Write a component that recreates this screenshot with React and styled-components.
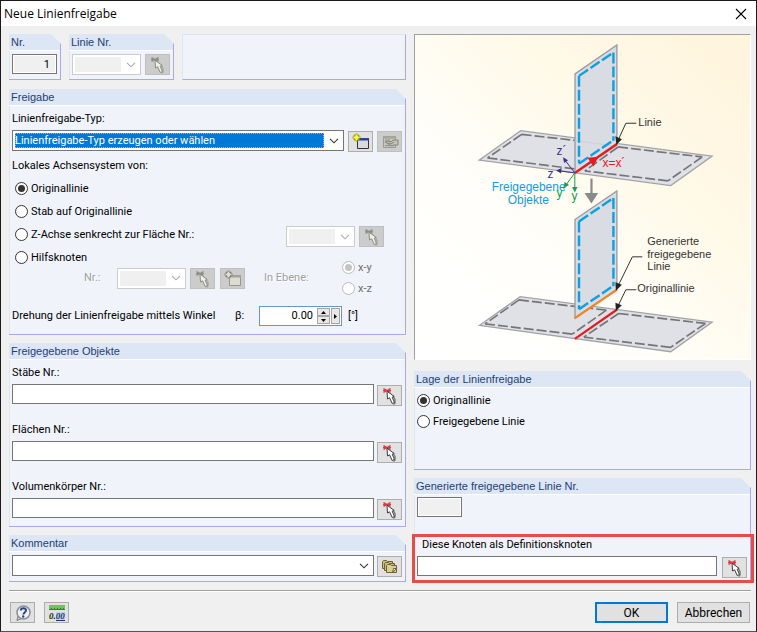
import React, { useState } from "react";
import styled, { createGlobalStyle } from "styled-components";

const GlobalStyle = createGlobalStyle`
  * {
    box-sizing: border-box;
  }
  body {
    margin: 0;
    background: #f0f0f0;
    color: #000;
    font-family: Roboto, "Liberation Sans", sans-serif;
    font-size: 11px;
    line-height: 16px;
  }
  button, input, select {
    margin: 0;
    font: inherit;
    color: inherit;
  }
`;

const Dialog = styled.div`
  min-height: 100vh;
  border: 1px solid #1a1a1e;
  border-bottom-color: #555;
  background: #f0f0f0;
`;

const TitleBar = styled.header`
  display: flex;
  align-items: center;
  justify-content: space-between;
  height: 25px;
  padding: 0 9px 0 3px;
  background: #fff;
`;

const Title = styled.h1`
  margin: 0;
  font-family: "Open Sans", sans-serif;
  font-size: 12px;
  font-weight: 400;
`;

const CloseButton = styled.button`
  display: flex;
  padding: 0;
  border: 0;
  background: none;
`;

const Columns = styled.main`
  display: grid;
  grid-template-columns: minmax(0, 397fr) minmax(0, 337fr);
  gap: 8px;
  padding: 8px 5px 8px 8px;
`;

const Column = styled.div`
  display: flex;
  flex-direction: column;
  gap: 8px;
`;

const TopRow = styled.div`
  display: flex;
  gap: 8px;
  height: 47px;
  padding-bottom: 1px;
`;

const GroupBox = styled.section`
  flex: none;
  border: 1px solid #a8a8ee;
  border-width: 0 1px 1px 0;
  background: #f0f4fa;
  clip-path: polygon(0 0, calc(100% - 10px) 0, 100% 10px, 100% 100%, 0 100%);
`;

const EmptyBox = styled.div`
  flex: 1;
  border: 1px solid #a8a8ee;
  border-top-color: #dce6f5;
  border-left-color: #dce6f5;
  background: #f0f4fa;
`;

const GroupTitle = styled.h2`
  height: 17px;
  margin: 0;
  padding-left: 2px;
  border-bottom: 1px solid #fff;
  background: #dce6f5;
  color: #1e4073;
  font-family: "Liberation Sans", Arial, sans-serif;
  font-size: 11px;
  font-weight: 400;
  line-height: 17px;
`;

const GroupBody = styled.div`
  padding: ${(p) => p.$pad || "4px 3px 4px 2px"};
  border-left: 1px solid #dce6f5;
`;

const Row = styled.div`
  display: flex;
  align-items: flex-start;
  gap: ${(p) => p.$gap || 4}px;

  & > button {
    margin-top: ${(p) => (p.$flush ? 0 : 1)}px;
  }
`;

const Label = styled.label`
  display: block;
  margin-bottom: 3px;
  padding-left: ${(p) => p.$indent || 0}px;
`;

const TextInput = styled.input`
  flex: ${(p) => (p.$width ? "none" : 1)};
  width: ${(p) => (p.$width ? `${p.$width}px` : "auto")};
  min-width: 0;
  height: 20px;
  padding: 0 6px 0 3px;
  border: 1px solid #767676;
  border-radius: 0;
  background: #fff;
  box-shadow: inset 0 0 0 1px #fff;

  &:read-only {
    background: #f0f0f0;
    text-align: right;
  }
`;

const ComboFrame = styled.div`
  display: flex;
  align-items: center;
  flex: ${(p) => (p.$small ? "none" : 1)};
  width: ${(p) => (p.$small ? "69px" : "auto")};
  min-width: 0;
  height: 21px;
  padding: 2px;
  border: 1px solid ${(p) => (p.$disabled ? "#ccc" : "#767676")};
  background: #fff;
  color: ${(p) => (p.$disabled ? "#aaa" : "#333")};

  svg {
    flex: none;
    margin: 0 2px 0 5px;
  }
`;

const ComboSelect = styled.select`
  flex: 1;
  min-width: 0;
  height: 15px;
  padding: 0;
  border: 0;
  border-radius: 0;
  appearance: none;
  background: ${(p) => (p.$active ? "#0078d7" : "#fff")};
  color: ${(p) => (p.$active ? "#fff" : "#000")};
  line-height: 15px;
  outline: ${(p) => (p.$active ? "1px dotted #ffa040" : "0")};
  outline-offset: -1px;

  &:disabled {
    background: #f0f0f0;
    opacity: 1;
  }
`;

const ToolButton = styled.button`
  display: flex;
  flex: none;
  align-items: center;
  justify-content: center;
  width: 25px;
  height: 21px;
  padding: 0;
  border: 1px solid #adadad;
  background: #e1e1e1;

  &:disabled {
    border-color: #bfbfbf;
    background: #ccc;
  }
`;

const AxesTitle = styled.div`
  margin: 6px 0 3px;
`;

const RadioLabel = styled.label`
  display: flex;
  align-items: center;
  gap: 3px;
  height: ${(p) => p.$height || 23}px;
  padding-left: ${(p) => (p.$indent ? 3 : 0)}px;
  color: ${(p) => (p.$disabled ? "#6d6d6d" : "#000")};
`;

const Radio = styled.input.attrs({ type: "radio" })`
  display: grid;
  place-items: center;
  flex: none;
  width: 13px;
  height: 13px;
  appearance: none;
  border: 1px solid #333;
  border-radius: 50%;
  background: #fff;

  &:checked::before {
    content: "";
    width: 7px;
    height: 7px;
    border-radius: 50%;
    background: #333;
  }
  &:disabled {
    border-color: #bbb;
  }
  &:disabled::before {
    background: #c4c4c4;
  }
`;

const RadioRow = styled.div`
  display: flex;
  align-items: center;
  justify-content: space-between;
  height: 23px;
  padding-right: 18px;
`;

const RadioTools = styled.div`
  display: flex;
  gap: 4px;
  padding-top: 4px;
`;

const HelperRow = styled.div`
  display: flex;
  align-items: center;
  height: 42px;
  margin-top: -12px;
  padding-left: 72px;
`;

const Dimmed = styled.label`
  flex: none;
  width: ${(p) => p.$width}px;
  color: #a0a0a0;
  text-shadow: 1px 1px 0 #fff;
`;

const HelperTools = styled.div`
  display: flex;
  gap: 5px;
  padding: 1px 19px 0 4px;
`;

const AngleRow = styled.div`
  display: grid;
  grid-template-columns: 223px 24px 83px auto;
  align-items: center;
  margin-top: 7px;
`;

const Unit = styled.span`
  padding-left: 6px;
`;

const Spinner = styled.div`
  display: flex;
  height: 20px;
  padding: 1px;
  border: 1px solid #6d95bf;
  background: #fff;
`;

const SpinnerInput = styled.input`
  flex: 1;
  min-width: 0;
  padding: 0 4px 0 0;
  border: 0;
  background: none;
  text-align: right;
`;

const SpinnerButtons = styled.div`
  display: grid;
  grid-template-rows: 1fr 1fr;
  width: 13px;
  margin-right: 1px;
`;

const SpinButton = styled.button`
  display: flex;
  align-items: center;
  justify-content: center;
  min-width: 9px;
  min-height: 0;
  padding: 0;
  border: 1px solid #a6a6a6;
  background: #e8e8e8;
`;

const FieldList = styled.div`
  display: flex;
  flex-direction: column;
  gap: 16px;
`;

const NodeField = styled.div`
  padding-top: 4px;
`;

const Picture = styled.figure`
  margin: 0 0 3px;
  border: 1px solid #fff;
  border-top-color: #a0a0a0;
  border-left-color: #a0a0a0;
  background: linear-gradient(to top right, #fff 0%, #fffefa 35%, #fff9e8 65%, #fff4dc 100%);

  svg {
    display: block;
    width: 100%;
  }
`;

const Diagram = styled.svg`
  font-family: "Liberation Sans", Arial, sans-serif;
  font-size: 11px;
  fill: #333;
`;

const HighlightArea = styled.div`
  position: relative;
`;

const Highlight = styled.div`
  position: absolute;
  right: -3px;
  bottom: -1px;
  left: -2px;
  height: 49px;
  border: 3px solid #e84c46;
  pointer-events: none;
`;

const LocationBody = styled.div`
  min-height: 81px;
  padding: 2px;
  border-left: 1px solid #dce6f5;
`;

const Footer = styled.footer`
  display: flex;
  align-items: center;
  gap: 9px;
  margin: 0 5px 0 8px;
  padding: 11px 1px 7px;
  border-top: 1px solid #a0a0a0;
  box-shadow: inset 0 1px 0 #fff;
`;

const FooterButton = styled.button`
  width: 73px;
  height: 21px;
  padding: 0;
  border: ${(p) => (p.$primary ? "2px solid #0078d7" : "1px solid #adadad")};
  background: #e1e1e1;
  font-size: 12px;
  line-height: 16px;
`;

const Spacer = styled.div`
  flex: 1;
`;

const Chevron = () => (
  <svg width="10" height="6" viewBox="0 0 10 6" fill="none" stroke="currentColor">
    <path d="M1 .8 5 4.8 9 .8" strokeWidth="1.1" />
  </svg>
);

const PickIcon = ({ disabled }) => (
  <svg width="18" height="18" viewBox="0 0 18 18">
    <path
      d="M2.5 1.500 9.500 5.500M9.500 1.500 2.500 5.500M2 3.500h8"
      stroke={disabled ? "#8f8f8a" : "#e0383c"}
      strokeWidth="1.4"
      fill="none"
    />
    <path d="M11.500 8.500 14 12.500v3.500l-1.500 1.500" stroke={disabled ? "#a5a5a0" : "#777"} strokeWidth="1.400" fill="none" />
    <path
      d="M6 4.200 6.500 12l2.100-1.200 2.600 5.700 2.300-1-2.300-5.300 2-.8z"
      fill={disabled ? "#efefe4" : "#fff"}
      stroke={disabled ? "#8c8c84" : "#3c3c3c"}
      strokeWidth="1"
    />
  </svg>
);

const NewIcon = ({ disabled }) => (
  <svg width="18" height="18" viewBox="0 0 18 18">
    <path d="M5.500 6.500h11v9h-11z" fill={disabled ? "#dddcd0" : "#d8dade"} stroke={disabled ? "#96968e" : "#333"} />
    <path d="M5 5h12v2.500H5z" fill={disabled ? "#a3a39b" : "#2e4585"} />
    <path
      d="M4.500 .5v8M.5 4.500h8M2 2l5 5M7 2 2 7"
      stroke={disabled ? "#85857c" : "#a3a31a"}
      strokeWidth="2"
    />
    <path
      d="M4.500 1.500v6M1.500 4.500h6M3 3l3 3M6 3 3 6"
      stroke={disabled ? "#deded4" : "#ffff29"}
      strokeWidth="1.200"
    />
  </svg>
);

const EditIcon = () => (
  <svg width="18" height="18" viewBox="0 0 18 18">
    <path d="M2.500 3.500h12v11h-12z" fill="#c6c6bd" stroke="#999990" />
    <path d="M2 3h13v2.500H2z" fill="#a4a49b" />
    <path d="M4 7h5M4 12.500h9" stroke="#92928a" />
    <path d="m4 9 3-1 3 1 2-2h5v5h-4l-3 1-4-3z" fill="#c2c2b8" stroke="#85857c" />
    <path d="m7 10 3 1 3-2" fill="none" stroke="#85857c" />
  </svg>
);

const CommentIcon = () => (
  <svg width="18" height="18" viewBox="0 0 18 18" stroke="#6b6234" fill="#c9bf84">
    <path d="M1.500 3.500 2.500 2.500h3l1 1h5v7h-10z" />
    <path d="M3.500 5.500 4.500 4.500h3l1 1h5v7h-10z" />
    <path d="M5.500 7.500 6.500 6.500h3l1 1h5v7h-10z" fill="#d9cf94" />
    <path d="M11.500 14.500 12.500 10.500h3z" fill="#fff8cf" />
  </svg>
);

const HelpIcon = () => (
  <svg width="18" height="18" viewBox="0 0 18 18">
    <path d="M4 12 3 16.500l4.500-2z" fill="#dfe1e6" stroke="#777" />
    <circle cx="9.500" cy="8.500" r="6.500" fill="#f1f2f5" stroke="#8c8f96" strokeWidth="1.500" />
    <path d="M6.800 6.500C7 3.700 12.200 3.500 12 6.500c-.1 1.900-2.600 2-2.600 4" fill="none" stroke="#2a4485" strokeWidth="2" />
    <circle cx="9.200" cy="12.500" r="1.200" fill="#2a4485" />
  </svg>
);

const UnitsIcon = () => (
  <svg width="18" height="18" viewBox="0 0 18 18">
    <path d="M1 1h16v5H1z" fill="#70c267" />
    <path d="M1 5.500h16M3.500 4v2M6.500 4v2M9.500 4v2M12.500 4v2M15.500 4v2" stroke="#348136" />
    <path d="M8 8h9v8H8z" fill="#c5d0e6" />
    <text x="1" y="15" fontFamily="Liberation Serif, serif" fontSize="9" fontStyle="italic" fontWeight="700" fill="#222">
      0.<tspan fill="#22396f">00</tspan>
    </text>
    <path d="M8 16.500h9" stroke="#22396f" />
  </svg>
);

const ReleaseDiagram = () => (
  <Diagram viewBox="0 0 336 325" role="img" aria-label="Linienfreigabe">
    <g fill="#dfe1e7" stroke="#a3a3a6" strokeWidth="1.300">
      <path d="M64.500 125.500 106 96l192 25.500-41.500 29.500z" />
      <path d="M64.500 291.300 105.500 262.500 298 288l-41.500 29.700z" />
    </g>
    <g fill="none" stroke="#757575" strokeWidth="1.700" strokeDasharray="10 3">
      <path d="M107 99.700 160.300 105.700M107 99.700 72.700 123.300M72.700 123.300 160.300 134.300" />
      <path d="M203.700 112.300 288 122.300M288 122.300 253.700 146.300M253.700 146.300 170.300 136.300M203.700 112.300 170.300 136.300" />
      <path d="M104.300 265.700 192 276M192 276 157.700 300M157.700 300 70.300 289.700M104.300 265.700 70.300 289.700" />
      <path d="M204.300 279.300 291.300 289.300M291.300 289.300 256.300 313.300M256.300 313.300 169.300 303M204.300 279.300 169.300 303" />
    </g>
    <path d="M160.300 304.700 202.700 275.300" stroke="#e31b23" strokeWidth="2.200" />
    <g fill="#d9dce2" stroke="#99999c" strokeWidth="1.300">
      <path d="M160.500 39 202.500 10v98.500L160.500 138z" />
      <path d="M160.500 185 202.500 156.500V255L160.500 284z" />
    </g>
    <path d="M160.500 106 202.500 111.500" stroke="#cdcfd4" />
    <g fill="none" stroke="#0c9fe2" strokeWidth="2.400" strokeDasharray="11 3">
      <path d="M164.500 41 199 17.500M199 17.500V106M164.500 129 199 105.500M164.500 41V129" />
      <path d="M164.500 187 199 163.500M199 163.500V252M164.500 275 199 251.500M164.500 187V275" />
    </g>
    <path d="M160.300 284 202.700 255.300" stroke="#f5821f" strokeWidth="2.200" />
    <path d="M160.300 138.300 202.700 109.300" stroke="#e31b23" strokeWidth="2.400" />
    <path d="M184 122 173 123 179 132z" fill="#e31b23" />

    <g stroke="#3b3187" fill="#3b3187">
      <path d="M160.300 138.300 150 125M160.300 138.300 145 136.300" />
      <path d="M148.500 122.500 149.500 128.500 153.500 125.500zM141.500 136 147 133.500 146.500 139z" stroke="none" />
    </g>
    <g stroke="#1a9c4b" fill="#1a9c4b">
      <path d="M160.300 138.300V154M160.300 138.300 151 151" />
      <path d="M160.300 158 157.500 152.500h5.500zM149 153.500 150 147.500 154.500 150.500z" stroke="none" />
    </g>
    <path d="M177 144v16" stroke="#8a8a8a" strokeWidth="2.200" />
    <path d="M170 158.500h13.700L177 169z" fill="#8a8a8a" />

    <g fill="none" stroke="#333">
      <path d="M222 88.500H211.500L203.500 106" />
      <path d="M228 222.500H218L203.500 252" />
      <path d="M222 255.500H211.500L203.500 272" />
    </g>
    <path d="M202 110 201 101.500 207.500 104.500zM201.500 256.500 201 248 207.500 250.500zM201.500 276.500 201 268.500 207.500 271z" fill="#222" />

    <text x="224" y="91">Linie</text>
    <text x="233" y="211">Generierte</text>
    <text x="233" y="224">freigegebene</text>
    <text x="233" y="236">Linie</text>
    <text x="223" y="258">Originallinie</text>
    <g fontSize="12">
      <g fill="#0c9fe2">
        <text x="77" y="156">Freigegebene</text>
        <text x="93" y="170">Objekte</text>
      </g>
      <g fill="#3b3187">
        <text x="142" y="120">z´</text>
        <text x="133" y="143">z</text>
      </g>
      <g fill="#1a9c4b">
        <text x="142" y="162">y´</text>
        <text x="157" y="166">y</text>
      </g>
      <text x="188" y="132" fill="#e31b23">x=x´</text>
    </g>
  </Diagram>
);

const Group = ({ title, pad, children }) => (
  <GroupBox>
    <GroupTitle>{title}</GroupTitle>
    <GroupBody $pad={pad}>{children}</GroupBody>
  </GroupBox>
);

const Combo = ({ small, disabled, active, options = [""], ...rest }) => (
  <ComboFrame $small={small} $disabled={disabled}>
    <ComboSelect disabled={disabled} $active={active} {...rest}>
      {options.map((option) => (
        <option key={option}>{option}</option>
      ))}
    </ComboSelect>
    <Chevron />
  </ComboFrame>
);

const PickButton = ({ disabled }) => (
  <ToolButton type="button" disabled={disabled} aria-label="Auswählen">
    <PickIcon disabled={disabled} />
  </ToolButton>
);

const RadioOption = ({ label, value, group, selected, onSelect, height, indent, disabled }) => (
  <RadioLabel $height={height} $indent={indent} $disabled={disabled}>
    <Radio
      name={group}
      value={value}
      checked={selected === value}
      disabled={disabled}
      onChange={() => onSelect(value)}
    />
    {label}
  </RadioLabel>
);

const objectFields = [
  { id: "members", label: "Stäbe Nr.:" },
  { id: "surfaces", label: "Flächen Nr.:" },
  { id: "solids", label: "Volumenkörper Nr.:" },
];

const App = () => {
  const [axes, setAxes] = useState("line");
  const [plane, setPlane] = useState("xy");
  const [location, setLocation] = useState("original");
  const [angle, setAngle] = useState("0.00");

  const turn = (step) => setAngle((Number(angle) + step).toFixed(2));
  const axesProps = { group: "axes", selected: axes, onSelect: setAxes, indent: true };
  const planeProps = { group: "plane", selected: plane, onSelect: setPlane, height: 21, disabled: true };
  const locationProps = { group: "location", selected: location, onSelect: setLocation, height: 21 };

  return (
    <>
      <GlobalStyle />
      <Dialog>
        <TitleBar>
          <Title>Neue Linienfreigabe</Title>
          <CloseButton type="button" aria-label="Schließen">
            <svg width="12" height="12" viewBox="0 0 12 12" stroke="#000">
              <path d="m1 1 10 10M11 1 1 11" strokeWidth="1.100" />
            </svg>
          </CloseButton>
        </TitleBar>

        <Columns>
          <Column>
            <TopRow>
              <Group title="Nr." pad="3px 3px 5px 2px">
                <Row>
                  <TextInput $width={45} defaultValue="1" readOnly aria-label="Nr." />
                </Row>
              </Group>
              <Group title="Linie Nr." pad="3px 3px 4px 2px">
                <Row $flush>
                  <Combo small disabled aria-label="Linie Nr." />
                  <PickButton disabled />
                </Row>
              </Group>
              <EmptyBox />
            </TopRow>

            <Group title="Freigabe" pad="5px 3px 8px 2px">
              <Label htmlFor="type">Linienfreigabe-Typ:</Label>
              <Row>
                <Combo id="type" active options={["Linienfreigabe-Typ erzeugen oder wählen"]} />
                <ToolButton type="button" aria-label="Neu">
                  <NewIcon />
                </ToolButton>
                <ToolButton type="button" disabled aria-label="Bearbeiten">
                  <EditIcon />
                </ToolButton>
              </Row>
              <AxesTitle>Lokales Achsensystem von:</AxesTitle>
              <RadioOption label="Originallinie" value="line" {...axesProps} />
              <RadioOption label="Stab auf Originallinie" value="member" {...axesProps} />
              <RadioRow>
                <RadioOption label="Z-Achse senkrecht zur Fläche Nr.:" value="surface" {...axesProps} />
                <RadioTools>
                  <Combo small disabled aria-label="Fläche Nr." />
                  <PickButton disabled />
                </RadioTools>
              </RadioRow>
              <RadioOption label="Hilfsknoten" value="nodes" {...axesProps} />
              <HelperRow>
                <Dimmed $width={33} htmlFor="node">Nr.:</Dimmed>
                <Combo small disabled id="node" />
                <HelperTools>
                  <PickButton disabled />
                  <ToolButton type="button" disabled aria-label="Neuer Knoten">
                    <NewIcon disabled />
                  </ToolButton>
                </HelperTools>
                <Dimmed as="span" $width={78}>In Ebene:</Dimmed>
                <div>
                  <RadioOption label="x-y" value="xy" {...planeProps} />
                  <RadioOption label="x-z" value="xz" {...planeProps} />
                </div>
              </HelperRow>
              <AngleRow>
                <label htmlFor="angle">Drehung der Linienfreigabe mittels Winkel</label>
                <span>β:</span>
                <Spinner>
                  <SpinnerInput id="angle" value={angle} onChange={(e) => setAngle(e.target.value)} />
                  <SpinnerButtons>
                    <SpinButton type="button" aria-label="Mehr" onClick={() => turn(1)}>
                      <svg width="5" height="3" viewBox="0 0 5 3"><path d="M0 3h5L2.500 0z" /></svg>
                    </SpinButton>
                    <SpinButton type="button" aria-label="Weniger" onClick={() => turn(-1)}>
                      <svg width="5" height="3" viewBox="0 0 5 3"><path d="M0 0h5L2.500 3z" /></svg>
                    </SpinButton>
                  </SpinnerButtons>
                  <SpinButton type="button" aria-label="Werte">
                    <svg width="3" height="5" viewBox="0 0 3 5"><path d="M0 0v5l3-2.500z" /></svg>
                  </SpinButton>
                </Spinner>
                <Unit>[°]</Unit>
              </AngleRow>
            </Group>

            <Group title="Freigegebene Objekte" pad="5px 3px 6px 2px">
              <FieldList>
                {objectFields.map((field) => (
                  <div key={field.id}>
                    <Label htmlFor={field.id}>{field.label}</Label>
                    <Row $gap={3}>
                      <TextInput id={field.id} />
                      <PickButton />
                    </Row>
                  </div>
                ))}
              </FieldList>
            </Group>

            <Group title="Kommentar" pad="3px 3px 4px 2px">
              <Row $gap={3}>
                <Combo aria-label="Kommentar" />
                <ToolButton type="button" aria-label="Kommentare">
                  <CommentIcon />
                </ToolButton>
              </Row>
            </Group>
          </Column>

          <Column>
            <Picture>
              <ReleaseDiagram />
            </Picture>
            <GroupBox>
              <GroupTitle>Lage der Linienfreigabe</GroupTitle>
              <LocationBody>
                <RadioOption label="Originallinie" value="original" {...locationProps} />
                <RadioOption label="Freigegebene Linie" value="released" {...locationProps} />
              </LocationBody>
            </GroupBox>
            <HighlightArea>
              <Group title="Generierte freigegebene Linie Nr." pad="2px 3px 3px 2px">
                <FieldList>
                  <Row>
                    <TextInput $width={45} readOnly aria-label="Generierte freigegebene Linie Nr." />
                  </Row>
                  <NodeField>
                    <Label htmlFor="defNodes" $indent={5}>Diese Knoten als Definitionsknoten</Label>
                    <Row $gap={5}>
                      <TextInput id="defNodes" />
                      <PickButton />
                    </Row>
                  </NodeField>
                </FieldList>
              </Group>
              <Highlight />
            </HighlightArea>
          </Column>
        </Columns>

        <Footer>
          <ToolButton type="button" aria-label="Hilfe">
            <HelpIcon />
          </ToolButton>
          <ToolButton type="button" aria-label="Einheiten">
            <UnitsIcon />
          </ToolButton>
          <Spacer />
          <FooterButton type="button" $primary>OK</FooterButton>
          <FooterButton type="button">Abbrechen</FooterButton>
        </Footer>
      </Dialog>
    </>
  );
};

export default App;
